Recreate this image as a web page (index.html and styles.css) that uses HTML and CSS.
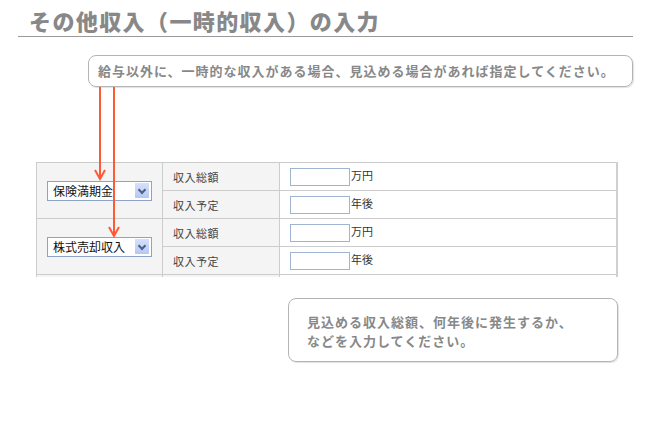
FILE: index.html
```html
<!DOCTYPE html>
<html>
<head>
	<title>その他収入の入力</title>
	<meta charset="utf-8">
	<link rel="stylesheet" href="styles.css">
</head>
<body>
	<div class="page">
		<h1 class="title">その他収入（一時的収入）の入力</h1>
		<div class="note note_top">給与以外に、一時的な収入がある場合、見込める場合があれば指定してください。</div>

		<div class="table_wrap">
			<table class="income">
				<tr>
					<td class="kind" rowspan="2">
						<div class="select"><span>保険満期金</span><i class="select_btn"></i></div>
					</td>
					<td class="label">収入総額</td>
					<td class="value"><input type="text" class="field">万円</td>
				</tr>
				<tr>
					<td class="label">収入予定</td>
					<td class="value"><input type="text" class="field">年後</td>
				</tr>
				<tr>
					<td class="kind" rowspan="2">
						<div class="select"><span>株式売却収入</span><i class="select_btn"></i></div>
					</td>
					<td class="label">収入総額</td>
					<td class="value"><input type="text" class="field">万円</td>
				</tr>
				<tr>
					<td class="label">収入予定</td>
					<td class="value"><input type="text" class="field">年後</td>
				</tr>
				<tr>
					<td class="kind"></td>
					<td class="label"></td>
					<td class="value"></td>
				</tr>
			</table>
		</div>

		<div class="note note_bottom">
			<p>見込める収入総額、何年後に発生するか、</p>
			<p>などを入力してください。</p>
		</div>

		<svg class="arrows" width="650" height="430" viewBox="0 0 650 430">
			<g fill="none" stroke="#ff5a36" stroke-width="2">
				<path d="M100 87 V178"/>
				<path d="M95 170 L100 179 L105 170"/>
				<path d="M114 87 V235"/>
				<path d="M109 227 L114 236 L119 227"/>
			</g>
		</svg>
	</div>
</body>
</html>
```

FILE: styles.css
```css
*{
	box-sizing:border-box;
	margin:0;
	padding:0;
}
body{
	background:white;
	font-family:"Noto Sans CJK JP","Noto Sans",sans-serif;
	color:#333;
}
.page{
	position:relative;
	width:650px;
	height:430px;
	overflow:hidden;
}
.title{
	margin:0 17px 0 18px;
	padding:6px 0 0 11px;
	height:37px;
	font-size:22px;
	letter-spacing:1.4px;
	line-height:28px;
	font-weight:900;
	color:#888;
	border-bottom:1px solid #999;
}
.note{
	border:1px solid #b4b4b4;
	border-radius:8px;
	box-shadow:1px 1px 1px #e2e2e2;
	font-size:13px;
	font-weight:bold;
	letter-spacing:1px;
	color:#888;
}
.note_top{
	margin:18px 0 0 88px;
	width:545px;
	height:32px;
	padding-left:9px;
	line-height:30px;
}
.table_wrap{
	margin:75px 0 0 36px;
	width:583px;
	height:115px;
	overflow:hidden;
}
.income{
	width:582px;
	border-collapse:collapse;
	font-size:11px;
	border-right:2px solid #d0d0d0;
}
.income td{
	border:1px solid #cccccc;
	height:28px;
	padding:0 0 0 10px;
	vertical-align:middle;
}
.income .kind{
	width:126px;
	background:#f4f4f4;
}
.income .label{
	width:117px;
	background:#f4f4f4;
	color:#444;
	letter-spacing:0.5px;
}
.income .value{
	background:white;
}
.field{
	width:60px;
	height:18px;
	border:1px solid #9fb4d2;
	vertical-align:middle;
	margin-right:1px;
}
.select{
	display:flex;
	align-items:center;
	justify-content:space-between;
	width:105px;
	height:20px;
	padding:0 2px 0 5px;
	border:1px solid #8ea4c6;
	background:white;
	font-size:12px;
	color:#111;
}
.select_btn{
	width:14px;
	height:15px;
	background:linear-gradient(#d6e2fb,#b4c8f5);
	position:relative;
}
.select_btn::after{
	content:"";
	position:absolute;
	left:4px;
	top:4px;
	width:4px;
	height:4px;
	border-right:2px solid #4d6185;
	border-bottom:2px solid #4d6185;
	transform:rotate(45deg);
}
.note_bottom{
	margin:21px 0 0 288px;
	width:330px;
	height:64px;
	padding:13px 0 0 18px;
	line-height:19px;
}
.arrows{
	position:absolute;
	left:0;
	top:0;
	pointer-events:none;
}
```
